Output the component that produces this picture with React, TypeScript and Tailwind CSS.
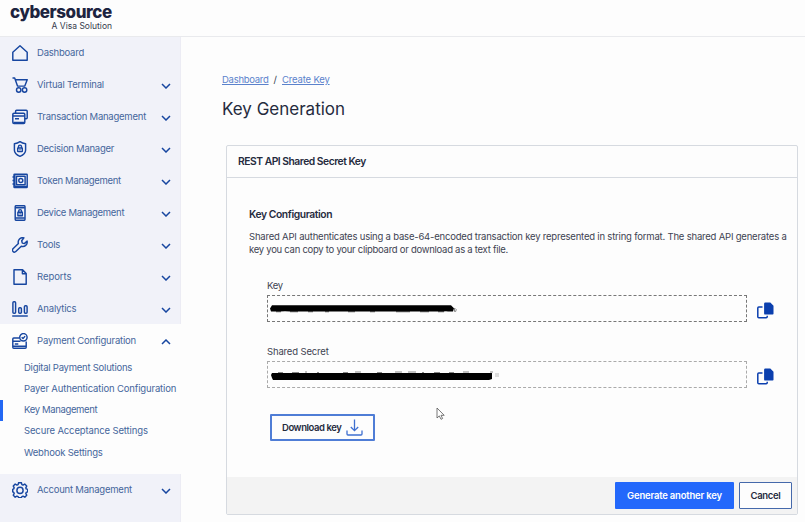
import React from "react";

type IconName =
  | "home" | "cart" | "cards" | "shield" | "safe" | "device"
  | "wrench" | "file" | "chart" | "payment" | "gear";

const icons: Record<IconName, React.ReactNode> = {
  home: <path d="M.8 7.2 8 .8l7.2 6.4v8H.8z" />,
  cart: (
    <>
      <path d="M.5.9h2.2l2.8 8.200h7.300l2.400-6.400H3.400" />
      <circle cx="6.7" cy="13" r="2.2" />
      <circle cx="12.6" cy="13" r="2.2" />
    </>
  ),
  cards: (
    <>
      <path d="M3.6 4V2.3A1 1 0 0 1 4.6 1.3h9.600a1 1 0 0 1 1 1v6.500a1 1 0 0 1-1 1h-1.400" />
      <rect x=".8" y="4.3" width="12" height="10.2" rx="1.2" />
      <path d="M1 7h11.600M3 9.800h4M1.500 13.400h11" />
    </>
  ),
  shield: (
    <>
      <path d="M8 .7c2 1.500 3.600 1.900 5.600 2.100v6.400c0 3-2.500 4.800-5.600 6.100-3.100-1.300-5.600-3.100-5.600-6.100V2.800C4.400 2.600 6 2.200 8 .7z" />
      <rect x="5.7" y="7" width="4.6" height="3.6" rx=".4" />
      <path d="M6.500 7V5.600a1.500 1.500 0 0 1 3 0V7M8 8.200v1.200" />
    </>
  ),
  safe: (
    <>
      <rect x="2" y="1.2" width="13.2" height="13.4" rx=".6" />
      <rect x="4.5" y="3.2" width="8.6" height="8.6" />
      <circle cx="8.8" cy="7.5" r="2" />
      <path d="M.5 4h3M.5 7.500h3M.5 11h3M2.800 2v12M3 13.400h12" />
    </>
  ),
  device: (
    <>
      <rect x="3.2" y=".7" width="9.8" height="14.6" rx="1" />
      <path d="M3.400 2.800h9.400M3.400 12.900h9.400" />
      <rect x="5.9" y="7.2" width="4.4" height="3.5" />
      <path d="M6.700 7V6a1.400 1.400 0 0 1 2.800 0v1M8.100 8.300v1.200" />
    </>
  ),
  wrench: (
    <path d="M11.900.9a4.400 4.400 0 0 0-5.500 5.500L1 11.800a1.900 1.900 0 0 0 0 2.700c.8.9 2 .9 2.800.1l5.500-5.400a4.400 4.400 0 0 0 5.800-5.100l-2.700 2.500-2.100-.5-.6-2.300z" />
  ),
  file: <path d="M2 .8h8.600L14.200 4.500v10.700H2zM10.400 1v3.700h3.600" />,
  chart: (
    <>
      <rect x=".9" y=".8" width="2.7" height="11.4" rx="1" />
      <rect x="6.7" y="6.7" width="2.7" height="5.5" rx="1" />
      <rect x="12.4" y="4.7" width="2.7" height="7.5" rx="1" />
      <path d="M.2 15h15.600" />
    </>
  ),
  payment: (
    <>
      <path d="M7.500 5H1.800a1 1 0 0 0-1 1v8.200a1 1 0 0 0 1 1h11.400a1 1 0 0 0 1-1V8.500M1 8.200h7.500M2.800 10.900h3.500M1 13.300h13" />
      <circle cx="11.4" cy="4.3" r="3.7" />
      <path d="m9.700 4.300 1.300 1.300 2.100-2.500" />
    </>
  ),
  gear: (
    <>
      <path d="M6.600.7h2.800l.5 1.900 1.100.5 1.700-1 2 2-.9 1.700.4 1.100 1.500.5v2.400l-1.500.6-.4 1.100.9 1.700-1.900 2-1.800-1-1.100.5-.5.900H6.600l-.5-.9-1.200-.5-1.700 1-1.900-2 .9-1.700-.5-1.100-1-.6V7.400l1-.5.500-1.100-.9-1.700 1.900-2 1.800 1 1.100-.5z" />
      <circle cx="8" cy="8.4" r="3.1" />
    </>
  ),
};

function Chevron({ up = false }: { up?: boolean }) {
  return (
    <svg viewBox="0 0 10 6" className="mt-[2px] h-[6px] w-[10px] shrink-0 fill-none stroke-[#1746a0]" strokeWidth="1.5">
      <path d={up ? "M1 5 5 1l4 4" : "M1 1l4 4 4-4"} />
    </svg>
  );
}

interface RowProps {
  icon: IconName;
  label: string;
  tracking: string;
  arrow?: "down" | "up";
}

function NavRow({ icon, label, tracking, arrow }: RowProps) {
  return (
    <div className="flex h-8 items-center pr-[9px] pl-3 text-[9.5px] text-[#45669c]">
      <svg viewBox="0 0 16 16" className="h-4 w-4 shrink-0 fill-none stroke-[#1746a0]" strokeWidth="1.45" strokeLinejoin="round">
        {icons[icon]}
      </svg>
      <span className={`ml-[9px] flex-1 whitespace-nowrap ${tracking}`}>{label}</span>
      {arrow && <Chevron up={arrow === "up"} />}
    </div>
  );
}

const mainRows: RowProps[] = [
  { icon: "home", label: "Dashboard", tracking: "tracking-[-0.22px]" },
  { icon: "cart", label: "Virtual Terminal", tracking: "tracking-[-0.2px]", arrow: "down" },
  { icon: "cards", label: "Transaction Management", tracking: "tracking-[-0.23px]", arrow: "down" },
  { icon: "shield", label: "Decision Manager", tracking: "tracking-[-0.26px]", arrow: "down" },
  { icon: "safe", label: "Token Management", tracking: "tracking-[-0.3px]", arrow: "down" },
  { icon: "device", label: "Device Management", tracking: "tracking-[-0.3px]", arrow: "down" },
  { icon: "wrench", label: "Tools", tracking: "tracking-[-0.2px]", arrow: "down" },
  { icon: "file", label: "Reports", tracking: "tracking-[-0.05px]", arrow: "down" },
  { icon: "chart", label: "Analytics", tracking: "tracking-[-0.2px]", arrow: "down" },
];

const subRows = [
  { label: "Digital Payment Solutions", tracking: "tracking-[-0.24px]" },
  { label: "Payer Authentication Configuration", tracking: "tracking-[-0.14px]" },
  { label: "Key Management", tracking: "tracking-[-0.35px]", active: true },
  { label: "Secure Acceptance Settings", tracking: "tracking-[-0.13px]" },
  { label: "Webhook Settings", tracking: "tracking-[-0.18px]" },
];

function CopyIcon() {
  return (
    <svg viewBox="0 0 17 17" className="h-[17px] w-[17px] shrink-0">
      <path d="M5.500 5H1.800a1 1 0 0 0-1 1v8.700a1 1 0 0 0 1 1h7.400a1 1 0 0 0 1-1v-1" fill="none" stroke="#0b3fae" strokeWidth="1.5" />
      <path d="M8.300.5h5L16.500 3.700v8.100a.8.800 0 0 1-.8.8H8.300a1.200 1.200 0 0 1-1.200-1.200V1.700A1.200 1.200 0 0 1 8.300.5z" fill="#0b3fae" />
    </svg>
  );
}

export default function App() {
  return (
    <div className="relative flex h-[522px] w-[805px] flex-col overflow-hidden bg-[#fdfdfd] font-['Inter','Liberation_Sans',sans-serif] text-[#252b3d]">
      <header className="h-[37px] shrink-0 border-b border-[#e9eaed] pl-[10px]">
        <div className="w-[102px]">
          <div className="pt-[3px] text-[17px] leading-[18px] font-extrabold tracking-[-0.45px] text-[#1d2440]">cybersource</div>
          <div className="text-right text-[8.5px] leading-[10px] text-[#353a4c]">A Visa Solution</div>
        </div>
      </header>
      <div className="flex min-h-0 flex-1">
        <aside className="flex w-[181px] shrink-0 flex-col border-r border-[#ececf4] bg-[#f1f2f9]">
          <nav className="h-[287px] shrink-0">
            {mainRows.map((row) => <NavRow key={row.label} {...row} />)}
          </nav>
          <div className="-mr-px h-[150px] shrink-0 bg-[#fdfdfd] pt-px pr-px">
            <NavRow icon="payment" label="Payment Configuration" tracking="tracking-[-0.19px]" arrow="up" />
            <ul className="text-[9.5px] text-[#45669c]">
              {subRows.map(({ label, tracking, active }) => (
                <li key={label} className="flex h-[21.3px] items-center">
                  <span className={active ? "h-[21px] w-[3px] shrink-0 bg-[#2368f4]" : "w-[3px] shrink-0"} />
                  <span className={`ml-[21px] whitespace-nowrap ${tracking}`}>{label}</span>
                </li>
              ))}
            </ul>
          </div>
          <NavRow icon="gear" label="Account Management" tracking="tracking-[-0.22px]" arrow="down" />
        </aside>
        <main className="flex-1 pl-[41px]">
          <div className="flex pt-[36px] text-[9.5px] leading-[14px] text-[#5b82cc]">
            <span className="tracking-[-0.27px] underline">Dashboard</span>
            <span className="mx-[5px] text-[#353a4c]">/</span>
            <span className="tracking-[-0.17px] underline">Create Key</span>
          </div>
          <h1 className="mt-[11px] text-[17px] leading-[22px]">Key Generation</h1>
          <section className="mt-[25px] ml-[4px] flex h-[370px] w-[572px] flex-col rounded-[2px] border border-[#d6dae0]">
            <h2 className="flex h-[32px] shrink-0 items-center border-b border-[#d6dae0] pt-px pl-[11px] text-[10.3px] font-semibold tracking-[-0.48px]">
              REST API Shared Secret Key
            </h2>
            <div className="flex-1 pt-[29px] pl-[22px]">
              <h3 className="text-[10.3px] leading-[14px] font-semibold tracking-[-0.4px]">Key Configuration</h3>
              <p className="mt-[9px] text-[9.5px] leading-[13px] whitespace-nowrap text-[#3d4352]">
                <span className="tracking-[-0.197px]">Shared API authenticates using a base-64-encoded transaction key represented in string format. The shared API generates a</span>
                <br />
                <span className="tracking-[-0.27px]">key you can copy to your clipboard or download as a text file.</span>
              </p>
              <div className="ml-[18px]">
                <div className="mt-[23px] text-[9.5px] leading-[13px] tracking-[-0.3px] text-[#3d4352]">Key</div>
                <div className="mt-[3px] flex items-center">
                  <div className="flex h-[27px] w-[480px] items-center border border-dashed border-[#777] pl-[2px]">
                    <svg viewBox="0 0 188 8" className="h-[8px] w-[188px]">
                      <path d="M2 .2h179l3 3-1 3.300h-5l-2-.3-3 .3H20l-5-.3-5 .3H1L0 3.500z" />
                      <path d="M6 6.700h5M20 6.700h8M38 6.700h5M55 6.700h4M78 6.700h7M100 6.700h5M126 6.700h14M150 6.700h9M168 6.700h6" stroke="#333" />
                      <path d="M184.500 3v3.500h1.200l.5-2-.8-1" fill="none" stroke="#888" />
                    </svg>
                  </div>
                  <span className="mt-[3px] ml-[10px]"><CopyIcon /></span>
                </div>
                <div className="mt-[23px] text-[9.5px] leading-[13px] tracking-[-0.15px] text-[#3d4352]">Shared Secret</div>
                <div className="mt-[3px] flex items-center">
                  <div className="flex h-[27px] w-[480px] items-center border border-dashed border-[#aaa] pl-[3px]">
                    <svg viewBox="0 0 230 10" className="mt-[3px] h-[10px] w-[230px]">
                      <path d="M7 1.500h5M21 1.500h7M34 1h2M46 1.500h2M72 1.500h5M84 1h6M106 1.500h5M124 1h7M137 1h8M151 1.500h2M163 1.500h6M178 1.500h5M192 1h6M219 1h3" stroke="#888" />
                      <path d="M1 2h220v6l-3 1H2L1 7 0 4z" />
                      <path d="M224 3h4M224 5h4" stroke="#bbb" />
                    </svg>
                  </div>
                  <span className="mt-[3px] ml-[10px]"><CopyIcon /></span>
                </div>
                <button className="mt-[26px] ml-[3px] flex h-[27px] w-[105px] items-center rounded-[1px] border-2 border-[#4f7dd6] pl-[10px] text-[9.5px] font-semibold tracking-[-0.44px] whitespace-nowrap">
                  <span className="w-[64px] shrink-0 pt-px text-left">Download key</span>
                  <svg viewBox="0 0 17 17" className="h-[17px] w-[17px] shrink-0 fill-none stroke-[#3e6fd0]" strokeWidth="1.3">
                    <path d="M8.500.5v11M4.800 8l3.700 3.700L12.200 8M1 11.500V15a1 1 0 0 0 1 1h13a1 1 0 0 0 1-1v-3.500" />
                  </svg>
                </button>
              </div>
            </div>
            <footer className="flex h-[37px] shrink-0 items-center justify-end gap-[5px] bg-[#f3f3f3] pr-[5px] text-[9.5px] font-semibold">
              <button className="h-[27px] w-[119px] rounded-[1px] bg-[#2368fb] pt-[2px] tracking-[-0.2px] whitespace-nowrap text-white">Generate another key</button>
              <button className="h-[27px] w-[53px] rounded-[1px] border border-[#4569ab] bg-[#fdfdfd] pt-[2px] tracking-[-0.35px]">Cancel</button>
            </footer>
          </section>
        </main>
      </div>
      <svg viewBox="0 0 9 13" className="absolute top-[407px] left-[436px] h-[13px] w-[9px] fill-white stroke-[#555]" strokeWidth=".8">
        <path d="M1 1v10l2.300-2.100L5 12.300l1.600-.8L5 8.300h3.200z" />
      </svg>
    </div>
  );
}
